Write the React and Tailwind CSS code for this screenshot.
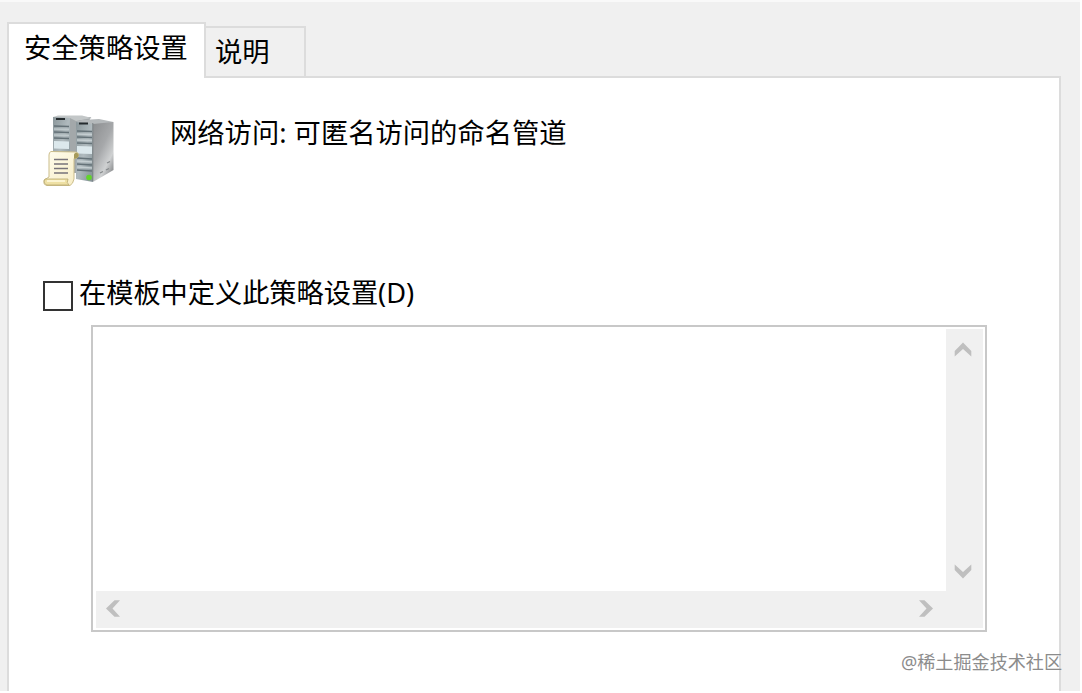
import React from 'react'

const ServerIcon = () => (
    <svg className="block w-[74px] h-[76px] shrink-0 blur-[0.4px]" viewBox="0 0 74 76" fill="none">
        <defs>
            <linearGradient id="front" x1="0" y1="0" x2="1" y2="1">
                <stop offset="0" stopColor="#8b979b" />
                <stop offset="0.5" stopColor="#b0babe" />
                <stop offset="1" stopColor="#808e93" />
            </linearGradient>
            <linearGradient id="side" x1="0" y1="0" x2="0.7" y2="1">
                <stop offset="0" stopColor="#8a8c8e" />
                <stop offset="0.5" stopColor="#a6a8aa" />
                <stop offset="0.8" stopColor="#cfd1d2" />
                <stop offset="1" stopColor="#8f9193" />
            </linearGradient>
            <linearGradient id="paper" x1="0" y1="0" x2="1" y2="1">
                <stop offset="0" stopColor="#fffdf0" />
                <stop offset="1" stopColor="#f7ecc2" />
            </linearGradient>
        </defs>

        {/* rear tower */}
        <path d="M27 4L49 4L46 10V60H27Z" fill="#a3a8aa" />
        <path d="M11 4L28 4V60H11Z" fill="url(#front)" />
        <path d="M11 4L16 2.5H40L50 5L34 8L28 5Z" fill="#c3c7c8" />
        <path d="M14 5H23V7H14Z" fill="#252b2e" />
        <path d="M12 13L27 13.5M12 19L27 19.5M12 25L27 25.5M12 39L27 39.5" stroke="#647177" strokeWidth="1.6" />
        <path d="M12 16L27 16.5M12 22L27 22.5" stroke="#bec8cb" strokeWidth="1.3" />
        <path d="M12 28L27 28.5V36L12 35.5Z" fill="#dce8ec" />

        {/* front tower */}
        <path d="M50 9L71.5 9V57L51 69Z" fill="url(#side)" />
        <path d="M34 9L51 9V69L34 66Z" fill="url(#front)" />
        <path d="M34 9L40 7L57 6L71.5 9L51 11Z" fill="#b5b9bb" />
        <path d="M37 9.5H46V11.5H37Z" fill="#252b2e" />
        <path d="M35 18L50 18.5M35 24L50 24.5M35 30L50 30.5M35 45L50 46M35 51L50 52M35 57L50 58" stroke="#657278" strokeWidth="1.6" />
        <path d="M35 21L50 21.5M35 27L50 27.5M35 48L50 49M35 54L50 55" stroke="#c5ced1" strokeWidth="1.3" />
        <path d="M35 33L50 33.5V41L35 40.5Z" fill="#dce8ec" />
        <path d="M50.8 10V68" stroke="#7a8184" strokeWidth="1" />
        <path d="M58 60L61 58.5M64 57L67 55.5M65 50L68 48.5" stroke="#85898b" strokeWidth="1.3" />
        <circle cx="47" cy="64.5" r="2.8" fill="#62d52b" />

        {/* scroll */}
        <path d="M9 38.5L34 39Q37 39.5 36.5 43L34 45.5H32L32 66Q31 71 28 72.5H5Q1 72 2 67L7 64V42Q7 39 9 38.5Z" fill="url(#paper)" stroke="#cbbd8b" strokeWidth="1" />
        <path d="M32 45.5V41.5Q33 38.5 36 40.5Q38 43.5 34 45.5Z" fill="#a69a59" />
        <path d="M3 66H26Q24 70 27 72H5Q1 71 3 66Z" fill="#eee0a4" stroke="#b9a970" strokeWidth="0.8" />
        <path d="M5 68H23" stroke="#fffbe0" strokeWidth="1.5" />
        <path d="M12 46.5H26M12 51H26M12 55.5H26M12 60H26" stroke="#77737a" strokeWidth="1.5" />
    </svg>
)

const Arrow = ({ className }) => (
    <svg className={`block w-[18px] h-[15px] ${className}`} viewBox="0 0 18 15">
        <path d="M9 0.5L17.3 9V14.5L9 7L0.7 14.5V9Z" fill="#bfbfbf" />
    </svg>
)

const Tabs = () => (
    <div className="flex items-end -mb-0.5 text-[27.3px] leading-[36px]">
        <div className="relative z-10 w-[199px] h-14 pl-[15px] pt-1.5 bg-white border-2 border-b-0 border-[#dcdcdc] whitespace-nowrap">
            安全策略设置
        </div>
        <div className="w-[100px] h-[52px] pl-[9px] pt-1.5 border-t-2 border-r-2 border-[#dcdcdc] whitespace-nowrap">
            说明
        </div>
    </div>
)

const PolicyList = () => (
    <div className="w-[896px] h-[307px] ml-[82px] mt-[13px] p-0.5 border-2 border-[#c8c8c8] bg-white flex flex-col">
        <div className="flex h-[262px]">
            <div className="flex-1" />
            <div className="w-[37px] bg-[#f0f0f0] flex flex-col items-center justify-between pt-[13px] pb-[12px]">
                <Arrow className="-ml-[3px]" />
                <Arrow className="rotate-180 -ml-[3px]" />
            </div>
        </div>
        <div className="flex h-[37px] items-center justify-between ml-px bg-[#f0f0f0] pl-2 pr-[48px] pb-0.5">
            <Arrow className="-rotate-90" />
            <Arrow className="rotate-90" />
        </div>
    </div>
)

const App = () => {
    return (
        <div className="w-[1082px] h-[693px] bg-white overflow-hidden text-black font-['Noto_Sans','Noto_Sans_CJK_SC',sans-serif]">
            <div className="relative flex flex-col w-[1080px] h-[691px] pl-[7px] pr-[19px] pt-[20px] bg-[#f0f0f0] border-t-2 border-[#f9f9f9]">
                <Tabs />
                <main className="flex-1 border-2 border-b-0 border-[#dcdcdc] bg-white">
                    <div className="flex h-[198px] pl-[33px] pt-[35px]">
                        <ServerIcon />
                        <p className="ml-[54px] mt-0.5 text-[27.3px] leading-[36px] whitespace-nowrap">
                            网络访问: 可匿名访问的命名管道
                        </p>
                    </div>
                    <label className="flex items-start h-9 pl-[34px] text-[27.2px] leading-[36px]">
                        <span className="w-[30px] h-[30px] mt-[5px] mr-1.5 border-2 border-[#333333] bg-white" />
                        <span className="-mt-px whitespace-nowrap">在模板中定义此策略设置(D)</span>
                    </label>
                    <PolicyList />
                </main>
                <span className="absolute left-[901px] top-[648px] text-[18.1px] leading-6 text-[#8c8c8c] whitespace-nowrap">
                    @稀土掘金技术社区
                </span>
            </div>
        </div>
    )
}

export default App
